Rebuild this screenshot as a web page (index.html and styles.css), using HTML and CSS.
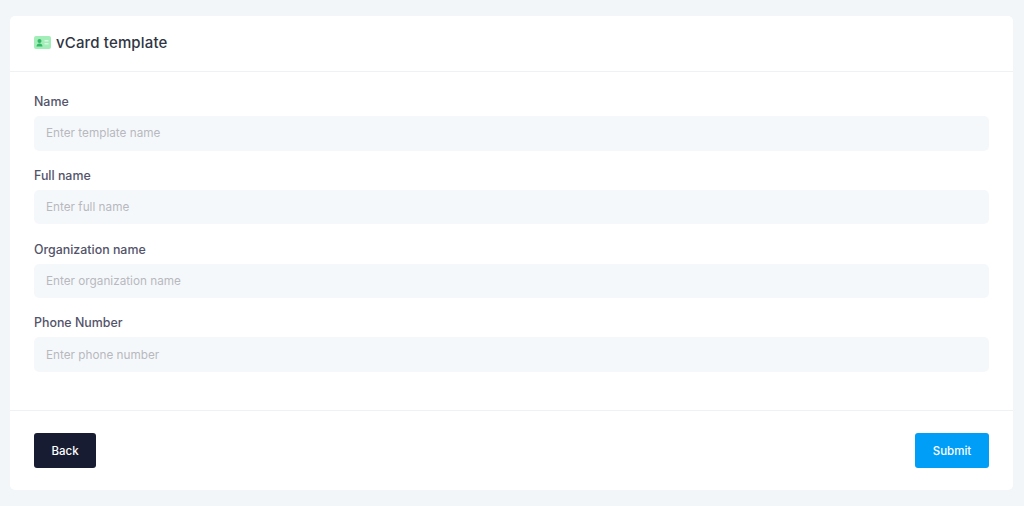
FILE: index.html
```html
<!DOCTYPE html>
<html lang="en">
<head>
    <meta charset="UTF-8">
    <title>vCard template</title>
    <link rel="stylesheet" href="styles.css">
</head>
<body>
    <div class="card">
        <div class="card-header">
            <svg class="card-icon" width="17" height="13" viewBox="0 0 17 13">
                <rect width="17" height="13" rx="2" fill="#a3edb9"/>
                <circle cx="5.5" cy="5" r="2" fill="#33b866"/>
                <path d="M2.5 10.5c0-2 1.300-3 3-3s3 1 3 3z" fill="#33b866"/>
                <rect x="10.500" y="4" width="4" height="1.500" fill="#d6f7e0"/>
                <rect x="10.500" y="7" width="4" height="1.500" fill="#d6f7e0"/>
            </svg>
            <h1 class="card-title">vCard template</h1>
        </div>
        <form class="card-body" action="#">
            <div class="field">
                <label class="field-label" for="name">Name</label>
                <input class="field-input" id="name" type="text" placeholder="Enter template name">
            </div>
            <div class="field">
                <label class="field-label" for="full">Full name</label>
                <input class="field-input" id="full" type="text" placeholder="Enter full name">
            </div>
            <div class="field">
                <label class="field-label" for="org">Organization name</label>
                <input class="field-input" id="org" type="text" placeholder="Enter organization name">
            </div>
            <div class="field">
                <label class="field-label" for="phone">Phone Number</label>
                <input class="field-input" id="phone" type="text" placeholder="Enter phone number">
            </div>
        </form>
        <div class="card-footer">
            <button class="btn btn-back" type="button">Back</button>
            <button class="btn btn-submit" type="submit">Submit</button>
        </div>
    </div>
</body>
</html>
```
FILE: styles.css
```css
* {
    box-sizing: border-box;
}

body {
    margin: 0;
    height: 506px;
    padding: 16px 11px 16px 10px;
    background: #f2f6f9;
    font-family: "Inter", "Liberation Sans", sans-serif;
    overflow: hidden;
}

.card {
    height: 474px;
    background: #fff;
    border-radius: 5px;
    display: flex;
    flex-direction: column;
}

.card-header {
    height: 56px;
    padding: 0 24px 2px;
    border-bottom: 1px solid #eff2f5;
    display: flex;
    align-items: center;
    gap: 5px;
}

.card-title {
    margin: 0;
    font-size: 15px;
    font-weight: 500;
    letter-spacing: 0.15px;
    color: #2f3543;
}

.card-body {
    height: 338px;
    padding: 23px 24px 0;
}

.field {
    height: 73.800px;
}

.field-label {
    display: block;
    height: 21px;
    line-height: 14px;
    font-size: 12.400px;
    font-weight: 500;
    color: #53536a;
}

.field-input {
    display: block;
    width: 100%;
    height: 34.600px;
    padding: 0 12px;
    border: 0;
    border-radius: 5px;
    background: #f5f8fa;
    font-family: inherit;
    font-size: 11.750px;
}

.field-input::placeholder {
    color: #b8b8c0;
}

.card-footer {
    flex: 1;
    padding: 0 24px;
    border-top: 1px solid #eff2f5;
    display: flex;
    justify-content: space-between;
    align-items: center;
}

.btn {
    height: 35px;
    border: 0;
    border-radius: 3px;
    color: #fff;
    font-family: inherit;
    font-size: 11.500px;
    font-weight: 500;
}

.btn-back {
    width: 62px;
    background: #181c32;
}

.btn-submit {
    width: 74px;
    background: #009ef7;
}
```
